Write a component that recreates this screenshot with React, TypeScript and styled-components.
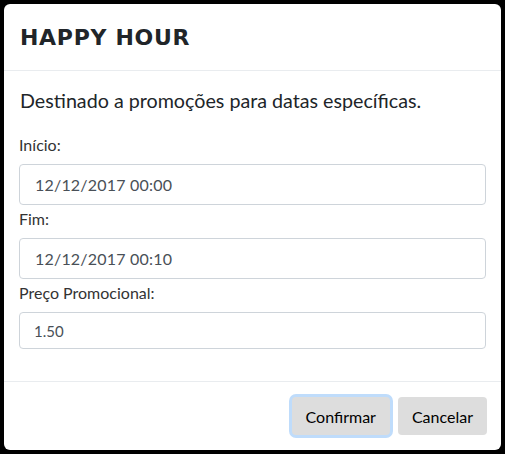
import styled, { createGlobalStyle } from "styled-components";

const GlobalStyle = createGlobalStyle`
  html, body {
    margin: 0;
    background: #000;
  }
  body {
    padding: 4px;
    font-family: Lato, "Liberation Sans", sans-serif;
  }
  * {
    box-sizing: border-box;
  }
`;

const Modal = styled.div`
  width: 497px;
  height: 446px;
  background-color: #fff;
  border-radius: 6px;
  display: flex;
  flex-direction: column;
  overflow: hidden;
`;

const Header = styled.header`
  height: 67px;
  padding: 0 16px;
  display: flex;
  align-items: center;
  border-bottom: 1px solid #e9ecef;
`;

const Title = styled.h4`
  margin: 0;
  font-family: "DejaVu Sans", sans-serif;
  font-weight: bold;
  font-size: 22px;
  letter-spacing: 0.7px;
  color: #212529;
  padding-top: 1px;
`;

const Body = styled.section`
  flex-grow: 1;
  padding: 16px 15px;
`;

const Description = styled.p`
  margin: 0 0 19px 1px;
  font-size: 19.7px;
  line-height: 27px;
  color: #212529;
`;

const Label = styled.label`
  display: block;
  margin: 0 0 7px;
  font-size: 16px;
  line-height: 24px;
  color: #333;
`;

const Input = styled.input<{ $tall?: boolean }>`
  display: block;
  width: 100%;
  height: ${(p) => (p.$tall ? "41px" : "37px")};
  margin: 0 0 ${(p) => (p.$tall ? "2px" : "0")};
  padding: 0 ${(p) => (p.$tall ? "15px" : "14px")};
  font-family: Lato, "Liberation Sans", sans-serif;
  font-size: ${(p) => (p.$tall ? "16px" : "15px")};
  letter-spacing: ${(p) => (p.$tall ? "0.2px" : "0")};
  color: #495057;
  background: #fff;
  border: 1px solid #ced4da;
  border-radius: 4px;
  outline: none;
`;

const Footer = styled.footer`
  padding: 15px 14px 15px;
  border-top: 1px solid #e9ecef;
  display: flex;
  justify-content: flex-end;
  gap: 8px;
`;

const Button = styled.button<{ $focused?: boolean }>`
  height: 38px;
  padding: 0 14px;
  font-family: Lato, "Liberation Sans", sans-serif;
  font-size: 16px;
  color: #000;
  background-color: #ddd;
  border: none;
  border-radius: 4px;
  cursor: pointer;
  box-shadow: ${(p) => (p.$focused ? "0 0 0 3px #bfdcfb" : "none")};
`;

export default function App() {
  return (
    <>
      <GlobalStyle />
      <Modal>
        <Header>
          <Title>HAPPY HOUR</Title>
        </Header>
        <Body>
          <Description>Destinado a promoções para datas específicas.</Description>
          <Label>Início:</Label>
          <Input $tall readOnly value="12/12/2017 00:00" />
          <Label>Fim:</Label>
          <Input $tall readOnly value="12/12/2017 00:10" />
          <Label>Preço Promocional:</Label>
          <Input readOnly value="1.50" />
        </Body>
        <Footer>
          <Button $focused>Confirmar</Button>
          <Button>Cancelar</Button>
        </Footer>
      </Modal>
    </>
  );
}
